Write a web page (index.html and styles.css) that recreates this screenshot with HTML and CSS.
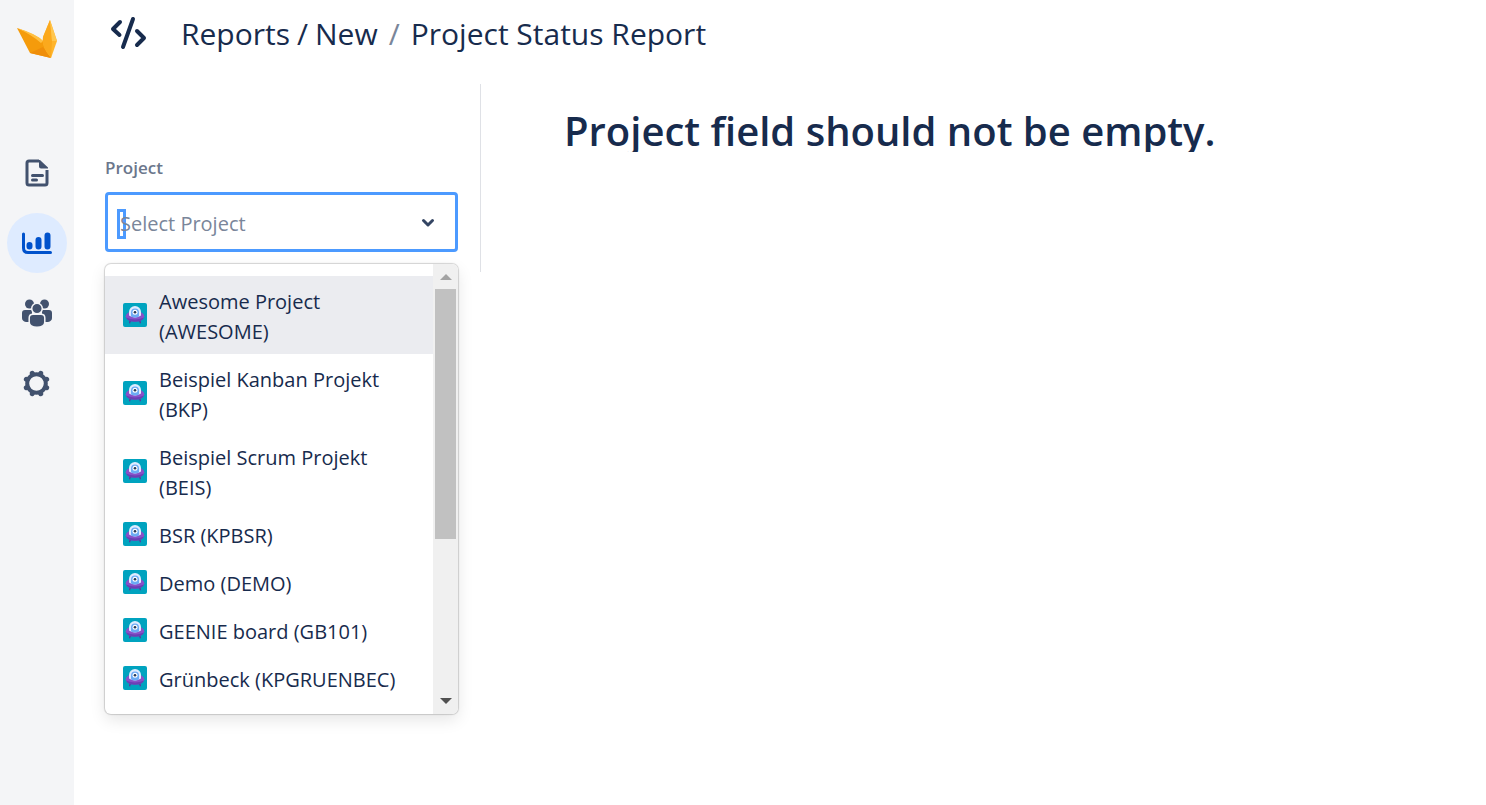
FILE: index.html
```html
<!DOCTYPE html>
<html lang="en">
<head>
  <meta charset="UTF-8" />
  <meta name="viewport" content="width=device-width, initial-scale=1.0"/>
  <title>Project Status Report</title>
  <link rel="stylesheet" href="styles.css">
</head>
<body>

  <!-- shared project avatar -->
  <svg class="sprite" aria-hidden="true">
    <symbol id="avatar" viewBox="0 0 24 24">
      <rect width="24" height="24" rx="2" fill="#00a3bf"/>
      <path d="M7.500 17L6.500 20.300M16.500 17L17.500 20.300" stroke="#5e35a0" stroke-width="1.300"/>
      <ellipse cx="12" cy="13.300" rx="9.300" ry="5.300" fill="#8850c8"/>
      <path d="M3 14.500Q12 18.500 21 14.500Q19 18.800 12 18.800Q5 18.800 3 14.500z" fill="#6b3fb5"/>
      <path d="M6 12.500V9a6 6 0 0 1 12 0v3.500q-6 4-12 0z" fill="#deebff"/>
      <path d="M8 13.500V9.500a4 4 0 0 1 8 0v4q-4 2-8 0z" fill="#6cabf5"/>
      <circle cx="12" cy="9.300" r="2.500" fill="#fff"/>
      <circle cx="12" cy="9.300" r="1.300" fill="#253858"/>
    </symbol>
  </svg>

  <div class="layout">
    <nav class="sidebar" aria-label="Main">
      <a class="logo" href="#" aria-label="Home">
        <svg width="42" height="40" viewBox="0 0 42 40">
          <path d="M1 8L14 33L35 38L27 21Q21 15 1 8z" fill="#f59b0b"/>
          <path d="M1 8Q21 14 27 21L25 23Q16 15 1 8z" fill="#ffc042"/>
          <path d="M14 33L27 27L35 38z" fill="#ef8e0a"/>
          <path d="M34 0L41 21L35 38Q25 26 27 17z" fill="#ffb52c"/>
          <path d="M34 0L36 21L35 38Q25 26 27 17z" fill="#fba91d"/>
          <path d="M34 0L41 21L36 21z" fill="#ffc64f"/>
        </svg>
      </a>
      <a class="nav-item" href="#" aria-label="Documents">
        <svg width="30" height="30" viewBox="0 0 30 30">
          <path d="M17 3H7Q5 3 5 5V25Q5 27 7 27H23Q25 27 25 25V12" fill="none" stroke="#42526e" stroke-width="3"/>
          <path d="M17 2H18L26 9.500V10.500H19Q17 10.500 17 8.500z" fill="#42526e"/>
          <path d="M10.500 17.500H20.500M10.500 22H14.500" stroke="#42526e" stroke-width="3" stroke-linecap="round"/>
        </svg>
      </a>
      <a class="nav-item active" href="#" aria-label="Reports" aria-current="page">
        <svg width="30" height="30" viewBox="0 0 30 30">
          <path d="M1.500 6V20Q1.500 24.500 6 24.500H28.500" fill="none" stroke="#0052cc" stroke-width="3" stroke-linecap="round"/>
          <path d="M7.500 17V18.500M16.500 12V18.500M25.500 7.500V18.500" stroke="#0052cc" stroke-width="6" stroke-linecap="round"/>
        </svg>
      </a>
      <a class="nav-item" href="#" aria-label="Teams">
        <svg width="30" height="30" viewBox="0 0 30 30" fill="#42526e">
          <circle cx="7.500" cy="6" r="4.500"/>
          <circle cx="22.500" cy="6" r="4.500"/>
          <path d="M3 12H10V24H4Q0 23 0 20V15Q0 12 3 12zM27 12H20V24H26Q30 23 30 20V15Q30 12 27 12z"/>
          <g stroke="#f4f5f7" stroke-width="1.500">
            <circle cx="15" cy="10.500" r="5.300"/>
            <path d="M11 16.300H19Q22.800 16.300 22.800 20V24Q22.800 29.200 15 29.200Q7.200 29.200 7.200 24V20Q7.200 16.300 11 16.300z"/>
          </g>
        </svg>
      </a>
      <a class="nav-item" href="#" aria-label="Settings">
        <svg width="30" height="30" viewBox="0 0 30 30">
          <circle cx="14.500" cy="15.500" r="9.300" fill="none" stroke="#42526e" stroke-width="4"/>
          <g stroke="#42526e" stroke-width="5" stroke-linecap="round" transform="rotate(22.500 14.500 15.500)">
            <path d="M14.500 4.500V5.500M14.500 25.500V26.500M3.500 15.500H4.500M24.500 15.500H25.500M6.700 7.700L7.400 8.400M21.600 22.600L22.300 23.300M6.700 23.300L7.400 22.600M21.600 8.400L22.300 7.700"/>
          </g>
        </svg>
      </a>
    </nav>

    <main class="content">
      <header class="page-header">
        <svg width="38" height="36" viewBox="0 0 38 36" fill="none" stroke="#172b4d" stroke-width="4" stroke-linecap="round" stroke-linejoin="round">
          <path d="M10 6L3 13L9.500 19M23 3L13 31M27 15L34 22L27 29"/>
        </svg>
        <div class="breadcrumb">
          <a href="#">Reports</a>
          <span>/</span>
          <a href="#">New</a>
          <span class="sep">/</span>
          <span>Project Status Report</span>
        </div>
      </header>

      <div class="report">
        <section class="filters">
          <label for="project">Project</label>
          <div class="select">
            <div class="select-control">
              <div class="select-value">
                <input id="project" type="text" role="combobox" aria-expanded="true" aria-controls="project-list" autocomplete="off">
                <span class="placeholder">Select Project</span>
              </div>
              <svg width="16" height="12" viewBox="0 0 16 12" fill="none" stroke="#344563" stroke-width="3" stroke-linecap="round" stroke-linejoin="round">
                <path d="M3.500 4.500L8 9L12.500 4.500"/>
              </svg>
            </div>
            <div class="menu">
              <ul id="project-list" class="menu-list" role="listbox" aria-label="Project">
                <li class="option focused" role="option"><svg class="avatar"><use href="#avatar"/></svg><span>Awesome Project (AWESOME)</span></li>
                <li class="option" role="option"><svg class="avatar"><use href="#avatar"/></svg><span>Beispiel Kanban Projekt (BKP)</span></li>
                <li class="option" role="option"><svg class="avatar"><use href="#avatar"/></svg><span>Beispiel Scrum Projekt (BEIS)</span></li>
                <li class="option" role="option"><svg class="avatar"><use href="#avatar"/></svg><span>BSR (KPBSR)</span></li>
                <li class="option" role="option"><svg class="avatar"><use href="#avatar"/></svg><span>Demo (DEMO)</span></li>
                <li class="option" role="option"><svg class="avatar"><use href="#avatar"/></svg><span>GEENIE board (GB101)</span></li>
                <li class="option" role="option"><svg class="avatar"><use href="#avatar"/></svg><span>Grünbeck (KPGRUENBEC)</span></li>
              </ul>
              <div class="scrollbar" aria-hidden="true">
                <div class="arrow up"></div>
                <div class="thumb"></div>
                <div class="arrow down"></div>
              </div>
            </div>
          </div>
        </section>

        <section class="result">
          <h1>Project field should not be empty.</h1>
        </section>
      </div>
    </main>
  </div>

</body>
</html>
```
FILE: styles.css
```css
* {
  box-sizing: border-box;
}

body {
  margin: 0;
  font-family: "Segoe UI", "Open Sans", "Noto Sans", sans-serif;
  font-size: 20px;
  color: #172b4d;
  background: #fff;
}

a {
  color: inherit;
  text-decoration: none;
}

svg {
  display: block;
  flex-shrink: 0;
}

.sprite {
  position: absolute;
  width: 0;
  height: 0;
}

.layout {
  display: flex;
  min-height: 100vh;
}

/* sidebar */
.sidebar {
  display: flex;
  flex-direction: column;
  align-items: center;
  gap: 10px;
  width: 74px;
  padding-top: 20px;
  background: #f4f5f7;
}

.logo {
  margin-bottom: 73px;
}

.nav-item {
  display: flex;
  align-items: center;
  justify-content: center;
  width: 60px;
  height: 60px;
  border-radius: 50%;
}

.nav-item.active {
  background: #deebff;
}

/* header */
.content {
  flex: 1;
  padding-left: 31px;
}

.page-header {
  display: flex;
  align-items: center;
  gap: 33px;
  height: 84px;
  padding: 0 0 16px 5px;
}

.breadcrumb {
  display: flex;
  gap: 7px;
  font-size: 30px;
  line-height: 40px;
}

.breadcrumb .sep {
  margin: 0 4px;
  color: #7a869a;
}

/* report */
.report {
  display: flex;
  align-items: flex-start;
}

.filters {
  width: 376px;
  padding: 72px 22px 20px 0;
  border-right: 1px solid #dfe1e6;
}

.filters label {
  display: block;
  margin-bottom: 12px;
  font-size: 17px;
  font-weight: 600;
  line-height: 24px;
  color: #6b778c;
}

.select {
  position: relative;
}

.select-control {
  display: flex;
  align-items: center;
  justify-content: space-between;
  height: 60px;
  padding: 0 19px 0 9px;
  border: 3px solid #4c9aff;
  border-radius: 4px;
}

.select-value {
  display: grid;
  align-items: center;
  padding-top: 4px;
}

.select-value input,
.select-value .placeholder {
  grid-area: 1 / 1;
}

.select-value input {
  width: 9px;
  height: 30px;
  padding: 0;
  border: 3px solid #4c9aff;
  outline: none;
  background: transparent;
}

.placeholder {
  padding-left: 3px;
  line-height: 30px;
  color: #7a869a;
}

.menu {
  position: absolute;
  top: 72px;
  left: 0;
  display: flex;
  width: 100%;
  height: 450px;
  border-radius: 6px;
  background: #fff;
  box-shadow: 0 0 1px 1px rgba(0, 0, 0, 0.16), 0 6px 16px rgba(0, 0, 0, 0.1);
  overflow: hidden;
}

.menu-list {
  flex: 1;
  margin: 0;
  padding: 12px 0;
  list-style: none;
  overflow: hidden;
}

.option {
  display: flex;
  align-items: center;
  gap: 12px;
  padding: 7px 18px;
  line-height: 30px;
}

.option span {
  padding-top: 4px;
}

.option.focused {
  background: #ebecf0;
}

.avatar {
  width: 24px;
  height: 24px;
}

.scrollbar {
  display: flex;
  flex-direction: column;
  align-items: center;
  width: 25px;
  padding: 10px 0;
  background: #f0f0f0;
}

.thumb {
  width: 21px;
  height: 250px;
  margin-top: 9px;
  background: #c1c1c1;
}

.arrow {
  border: 6px solid transparent;
}

.arrow.up {
  border-top: 0;
  border-bottom-color: #a3a3a3;
}

.arrow.down {
  margin-top: auto;
  border-bottom: 0;
  border-top-color: #505050;
}

.result {
  flex: 1;
  padding: 20px 0 0 83px;
}

.result h1 {
  height: 48px;
  margin: 0;
  font-size: 40px;
  font-weight: 600;
  line-height: 54px;
  overflow: hidden;
}
```
